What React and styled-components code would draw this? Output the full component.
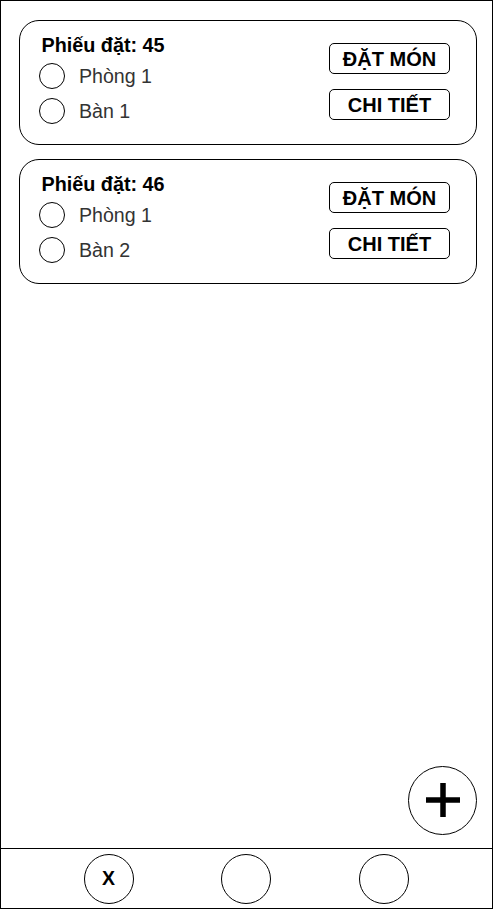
import React from "react";
import styled, { createGlobalStyle } from "styled-components";

const Global = createGlobalStyle`
  html, body { margin: 0; padding: 0; background: #fff; }
  body { font-family: "Liberation Sans", Arial, sans-serif; }
  * { box-sizing: border-box; }
`;

const Frame = styled.div`
  position: relative;
  width: 493px;
  height: 909px;
  border: 1px solid #000;
  display: flex;
  flex-direction: column;
  background: #fff;
`;

const Main = styled.main`
  flex: 1;
  padding: 19px 15px 0 18px;
  display: flex;
  flex-direction: column;
  gap: 14px;
`;

const Card = styled.section`
  border: 1px solid #000;
  border-radius: 20px;
  height: 125px;
  padding: 0 26px 0 19px;
  display: flex;
  align-items: flex-start;
  justify-content: space-between;
`;

const Info = styled.div`
  display: flex;
  flex-direction: column;
  padding-top: 13px;
`;

const Title = styled.div`
  font-size: 19.8px;
  font-weight: bold;
  line-height: 23px;
  color: #000;
  margin-left: 2.5px;
  margin-bottom: 6px;
`;

const Rows = styled.div`
  display: flex;
  flex-direction: column;
  gap: 9px;
`;

const Row = styled.div`
  display: flex;
  align-items: center;
  gap: 14px;
  height: 26px;
`;

const Radio = styled.span`
  width: 26px;
  height: 26px;
  border: 1px solid #000;
  border-radius: 50%;
  flex: none;
`;

const Label = styled.span`
  font-size: 19.6px;
  color: #333;
  line-height: 23px;
`;

const Actions = styled.div`
  display: flex;
  flex-direction: column;
  gap: 15px;
  padding-top: 22px;
`;

const ActionButton = styled.button`
  width: 121px;
  height: 31px;
  border: 1px solid #000;
  border-radius: 5px;
  background: #fff;
  font-family: "Liberation Sans", Arial, sans-serif;
  font-size: 20px;
  font-weight: bold;
  color: #000;
  padding: 0;
  display: flex;
  align-items: center;
  justify-content: center;
  line-height: 1;
`;

const Fab = styled.button`
  position: absolute;
  right: 15px;
  bottom: 73px;
  width: 69px;
  height: 69px;
  border: 1px solid #000;
  border-radius: 50%;
  background: #fff;
  padding: 0 0 2px 0;
  display: flex;
  align-items: center;
  justify-content: center;
`;

const BottomBar = styled.nav`
  height: 60px;
  border-top: 1px solid #000;
  display: flex;
  align-items: center;
  justify-content: center;
  gap: 87.5px;
  padding-right: 1px;
`;

const NavButton = styled.button`
  width: 50px;
  height: 50px;
  border: 1px solid #000;
  border-radius: 50%;
  background: #fff;
  padding: 0;
  font-family: "Liberation Sans", Arial, sans-serif;
  font-size: 19.5px;
  font-weight: bold;
  color: #000;
  display: flex;
  align-items: center;
  justify-content: center;
  line-height: 1;
`;

const orders = [
  { id: 45, room: "Phòng 1", table: "Bàn 1" },
  { id: 46, room: "Phòng 1", table: "Bàn 2" },
];

export default function App() {
  return (
    <>
      <Global />
      <Frame>
        <Main>
          {orders.map((o) => (
            <Card key={o.id}>
              <Info>
                <Title>Phiếu đặt: {o.id}</Title>
                <Rows>
                  <Row>
                    <Radio />
                    <Label>{o.room}</Label>
                  </Row>
                  <Row>
                    <Radio />
                    <Label>{o.table}</Label>
                  </Row>
                </Rows>
              </Info>
              <Actions>
                <ActionButton>ĐẶT MÓN</ActionButton>
                <ActionButton>CHI TIẾT</ActionButton>
              </Actions>
            </Card>
          ))}
        </Main>
        <Fab aria-label="Thêm">
          <svg width="34" height="34" viewBox="0 0 34 34">
            <rect x="0" y="14.25" width="34" height="5.5" fill="#000" />
            <rect x="14.25" y="0" width="5.5" height="34" fill="#000" />
          </svg>
        </Fab>
        <BottomBar>
          <NavButton>X</NavButton>
          <NavButton />
          <NavButton />
        </BottomBar>
      </Frame>
    </>
  );
}
